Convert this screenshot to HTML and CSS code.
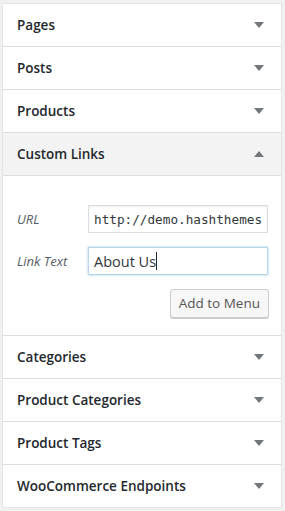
FILE: index.html
```html
<!DOCTYPE html>
<html lang="en">
<head>
    <meta charset="UTF-8">
    <meta name="viewport" content="width=device-width, initial-scale=1.0">
    <title>Menu Items</title>
    <link rel="stylesheet" href="styles.css">
</head>
<body>
    <ul class="accordion">
        <li class="section"><h3 class="section-title">Pages<span class="arrow"></span></h3></li>
        <li class="section"><h3 class="section-title">Posts<span class="arrow"></span></h3></li>
        <li class="section"><h3 class="section-title">Products<span class="arrow"></span></h3></li>
        <li class="section open">
            <h3 class="section-title">Custom Links<span class="arrow"></span></h3>
            <div class="section-content">
                <div class="field">
                    <label for="url">URL</label>
                    <input type="text" id="url" class="code" value="http://demo.hashthemes.com">
                </div>
                <div class="field">
                    <label for="link-text">Link Text</label>
                    <div class="input focused">About Us<span class="caret"></span></div>
                </div>
                <div class="actions">
                    <button class="button">Add to Menu</button>
                </div>
            </div>
        </li>
        <li class="section"><h3 class="section-title">Categories<span class="arrow"></span></h3></li>
        <li class="section"><h3 class="section-title">Product Categories<span class="arrow"></span></h3></li>
        <li class="section"><h3 class="section-title">Product Tags<span class="arrow"></span></h3></li>
        <li class="section"><h3 class="section-title">WooCommerce Endpoints<span class="arrow"></span></h3></li>
    </ul>
</body>
</html>
```

FILE: styles.css
```css
body {
    margin: 0;
    padding: 3px 3px 2px 2px;
    background: #f1f1f1;
    font-family: 'Open Sans', sans-serif;
    color: #23282d;
}
.accordion {
    list-style: none;
    margin: 0;
    padding: 0;
    background: white;
    border: 1px solid #e5e5e5;
}
.section {
    border-bottom: 1px solid #dddddd;
}
.section:last-child {
    border-bottom: none;
}
.section-title {
    margin: 0;
    height: 42px;
    padding: 0 17px 0 14px;
    display: flex;
    align-items: center;
    justify-content: space-between;
    font-size: 13.5px;
    font-weight: 600;
    color: #23282d;
}
.arrow {
    width: 0;
    height: 0;
    border-left: 5px solid transparent;
    border-right: 5px solid transparent;
    border-top: 6px solid #72777c;
}
.open .section-title {
    background: #f3f3f3;
    border-bottom: 1px solid #dddddd;
}
.open .arrow {
    border-top: none;
    border-bottom: 6px solid #72777c;
}
.section-content {
    padding: 29px 12px 17px 14px;
}
.field {
    display: flex;
    align-items: center;
    margin-bottom: 14px;
}
.field label {
    width: 71px;
    font-size: 13px;
    font-style: italic;
    color: #555d66;
}
.field input, .field .input {
    box-sizing: border-box;
    width: 180px;
    height: 28px;
    padding: 0 5px;
    border: 1px solid #dddddd;
    background: white;
    color: #32373c;
    box-shadow: inset 0 1px 2px rgba(0, 0, 0, 0.07);
}
.field input.code {
    font-family: 'DejaVu Sans Mono', monospace;
    font-size: 12.7px;
    outline: none;
}
.field .input {
    display: flex;
    align-items: center;
    font-size: 14.5px;
}
.field .input.focused {
    border-color: #b9d5ea;
    box-shadow: 0 0 2px rgba(30, 140, 190, 0.5);
}
.caret {
    display: inline-block;
    width: 1px;
    height: 18px;
    background: #23282d;
}
.actions {
    display: flex;
    justify-content: flex-end;
}
.button {
    height: 29px;
    padding: 0 8px 1px;
    font-family: 'Open Sans', sans-serif;
    font-size: 13.5px;
    color: #555555;
    background: #f7f7f7;
    border: 1px solid #cccccc;
    border-radius: 3px;
    box-shadow: 0 1px 0 #cccccc;
}
```
